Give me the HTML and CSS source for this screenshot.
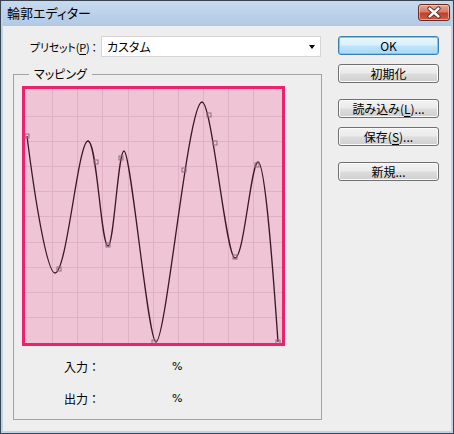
FILE: index.html
```html
<!DOCTYPE html>
<html lang="ja">
<head>
<meta charset="utf-8">
<title>輪郭エディター</title>
<link rel="stylesheet" href="styles.css">
</head>
<body>
<div class="window">
  <div class="titlebar">
    <span class="title">輪郭エディター</span>
    <span class="close">
      <svg width="32" height="17" viewBox="0 0 32 17">
        <path d="M11.5 4.5 L20.5 12.5 M20.5 4.5 L11.5 12.5" stroke="#5a1f18" stroke-width="4.2" stroke-linecap="round"/>
        <path d="M11.5 4.5 L20.5 12.5 M20.5 4.5 L11.5 12.5" stroke="#ffffff" stroke-width="2.4" stroke-linecap="round"/>
      </svg>
    </span>
  </div>
  <div class="client">
    <div class="left">
      <div class="preset-row">
        <span class="label">プリセット(<u>P</u>)<span class="colon">：</span></span>
        <div class="select">
          <span class="select-text">カスタム</span>
          <span class="arrow"></span>
        </div>
      </div>
      <div class="group">
        <span class="legend">マッピング</span>
        <div class="graph">
          <svg width="257" height="254" viewBox="25 89 257 254">
            <g class="grid">
              <line x1="52.5" y1="89" x2="52.5" y2="343"/>
              <line x1="77.5" y1="89" x2="77.5" y2="343"/>
              <line x1="102.5" y1="89" x2="102.5" y2="343"/>
              <line x1="128.5" y1="89" x2="128.5" y2="343"/>
              <line x1="153.5" y1="89" x2="153.5" y2="343"/>
              <line x1="178.5" y1="89" x2="178.5" y2="343"/>
              <line x1="203.5" y1="89" x2="203.5" y2="343"/>
              <line x1="228.5" y1="89" x2="228.5" y2="343"/>
              <line x1="253.5" y1="89" x2="253.5" y2="343"/>
              <line x1="25" y1="116.5" x2="282" y2="116.5"/>
              <line x1="25" y1="141.5" x2="282" y2="141.5"/>
              <line x1="25" y1="166.5" x2="282" y2="166.5"/>
              <line x1="25" y1="191.5" x2="282" y2="191.5"/>
              <line x1="25" y1="216.5" x2="282" y2="216.5"/>
              <line x1="25" y1="242.5" x2="282" y2="242.5"/>
              <line x1="25" y1="267.5" x2="282" y2="267.5"/>
              <line x1="25" y1="292.5" x2="282" y2="292.5"/>
              <line x1="25" y1="317.5" x2="282" y2="317.5"/>
            </g>
            <path class="curve" d="M27,136 C35,200 47,273 55,273 C67,273 78,141 88,141 C97,141 101,246 108,246 C114,246 118,151 124,151 C131,151 148,342 156,342 C166,342 188,102 202,102 C212,102 226,258 235,258 C244,258 251,162 258,162 C266,162 275,300 278,342"/>
            <g class="pts">
              <rect x="25" y="134" width="4" height="4"/>
              <rect x="57" y="267" width="4" height="4"/>
              <rect x="94" y="160" width="4" height="4"/>
              <rect x="106" y="243" width="4" height="4"/>
              <rect x="119" y="156" width="4" height="4"/>
              <rect x="152" y="340" width="4" height="4"/>
              <rect x="182" y="168" width="4" height="4"/>
              <rect x="207" y="113" width="4" height="4"/>
              <rect x="213" y="141" width="4" height="4"/>
              <rect x="233" y="255" width="4" height="4"/>
              <rect x="255" y="163" width="4" height="4"/>
              <rect x="276" y="340" width="4" height="4"/>
            </g>
          </svg>
        </div>
        <div class="readout first"><span class="r-label">入力<span class="fw">：</span></span><span class="r-unit">%</span></div>
        <div class="readout second"><span class="r-label">出力<span class="fw">：</span></span><span class="r-unit">%</span></div>
      </div>
    </div>
    <div class="buttons">
      <div class="btn default">OK</div>
      <div class="btn gap-s">初期化</div>
      <div class="btn gap-l">読み込み(<u>L</u>)...</div>
      <div class="btn gap-s">保存(<u>S</u>)...</div>
      <div class="btn gap-l">新規...</div>
    </div>
  </div>
</div>
</body>
</html>
```

FILE: styles.css
```css
* { box-sizing: border-box; }
html, body { margin: 0; padding: 0; }
body {
  width: 454px;
  height: 434px;
  overflow: hidden;
  font-family: "Noto Sans CJK JP", sans-serif;
  font-size: 12px;
  font-feature-settings: "palt";
  color: #000;
}
.fw { font-feature-settings: normal; }
.window {
  width: 454px;
  height: 434px;
  border: 1px solid #3a4450;
  background: #bcd3ec;
  padding: 0 2px 2px 2px;
  display: flex;
  flex-direction: column;
}
.titlebar {
  height: 25px;
  flex: none;
  display: flex;
  align-items: center;
  justify-content: space-between;
  background: linear-gradient(#c7daef, #b1c9e5);
  padding: 0 1px 0 4px;
}
.title {
  font-size: 13px;
  line-height: 16px;
  margin-top: -1px;
}
.close {
  width: 32px;
  height: 17px;
  margin-top: -2px;
  border: 1px solid #6d2a22;
  border-radius: 3px;
  background: linear-gradient(#e6a895 0%, #d47c68 45%, #c2402c 55%, #c95f44 100%);
  box-shadow: inset 0 0 0 1px rgba(255, 220, 205, 0.55);
  display: flex;
}
.close svg { display: block; margin: -1px; }
.client {
  flex: 1;
  background: #eeeeee;
  display: flex;
  padding-top: 10px;
}
.left {
  width: 309px;
  flex: none;
  margin-left: 10px;
  display: flex;
  flex-direction: column;
}
.preset-row {
  height: 21px;
  display: flex;
  align-items: center;
  padding-left: 17px;
}
.label {
  width: 71px;
  flex: none;
  font-size: 11px;
  line-height: 16px;
  white-space: nowrap;
  letter-spacing: -0.2px;
}
.colon { margin-left: 2px; }
.select {
  width: 220px;
  flex: none;
  height: 21px;
  background: #fff;
  border: 1px solid #d5d5d5;
  display: flex;
  align-items: center;
  padding-left: 5px;
  padding-right: 5px;
}
.select-text { line-height: 16px; }
.arrow {
  margin-left: auto;
  width: 0;
  height: 0;
  border-left: 3.5px solid transparent;
  border-right: 3.5px solid transparent;
  border-top: 4px solid #000;
}
.group {
  position: relative;
  margin-top: 17px;
  height: 346px;
  border: 1px solid #a3a3a3;
  padding-top: 11px;
  padding-left: 8px;
}
.legend {
  position: absolute;
  top: -9px;
  left: 15px;
  padding: 0 5px;
  background: #eeeeee;
  line-height: 16px;
  white-space: nowrap;
}
.graph {
  width: 263px;
  height: 260px;
  border: 3px solid #ee216f;
  background: #efc5d6;
}
.graph svg { display: block; }
.grid line { stroke: #e0b0c4; stroke-width: 1; }
.curve { fill: none; stroke: #3a1826; stroke-width: 1.3; }
.pts rect { fill: none; stroke: #8e6a7c; stroke-width: 1; }
.readout {
  height: 20px;
  display: flex;
  align-items: center;
  padding-left: 42px;
}
.readout.first { margin-top: 11px; }
.readout.second { margin-top: 12px; }
.r-label { width: 108px; line-height: 16px; white-space: nowrap; }
.r-unit { line-height: 16px; font-family: "DejaVu Sans", sans-serif; font-size: 11px; }
.buttons {
  margin-left: 16px;
  width: 101px;
  flex: none;
  display: flex;
  flex-direction: column;
}
.btn {
  height: 19px;
  border: 1px solid #707070;
  border-radius: 3px;
  background: linear-gradient(#f2f2f2 0%, #ebebeb 48%, #dddddd 52%, #cfcfcf 100%);
  box-shadow: inset 0 0 0 1px #fbfbfb;
  display: flex;
  align-items: center;
  justify-content: center;
  line-height: 16px;
  white-space: nowrap;
}
.btn.default {
  border-color: #3c7fb1;
  background: linear-gradient(#eaf6fd 0%, #d9f0fc 48%, #bee6fd 52%, #a7d9f5 100%);
  box-shadow: inset 0 0 0 1px #5fd4f8;
}
.btn.gap-s { margin-top: 9px; }
.btn.gap-l { margin-top: 16px; }
u { text-decoration-thickness: 1px; text-underline-offset: 2px; }
```
